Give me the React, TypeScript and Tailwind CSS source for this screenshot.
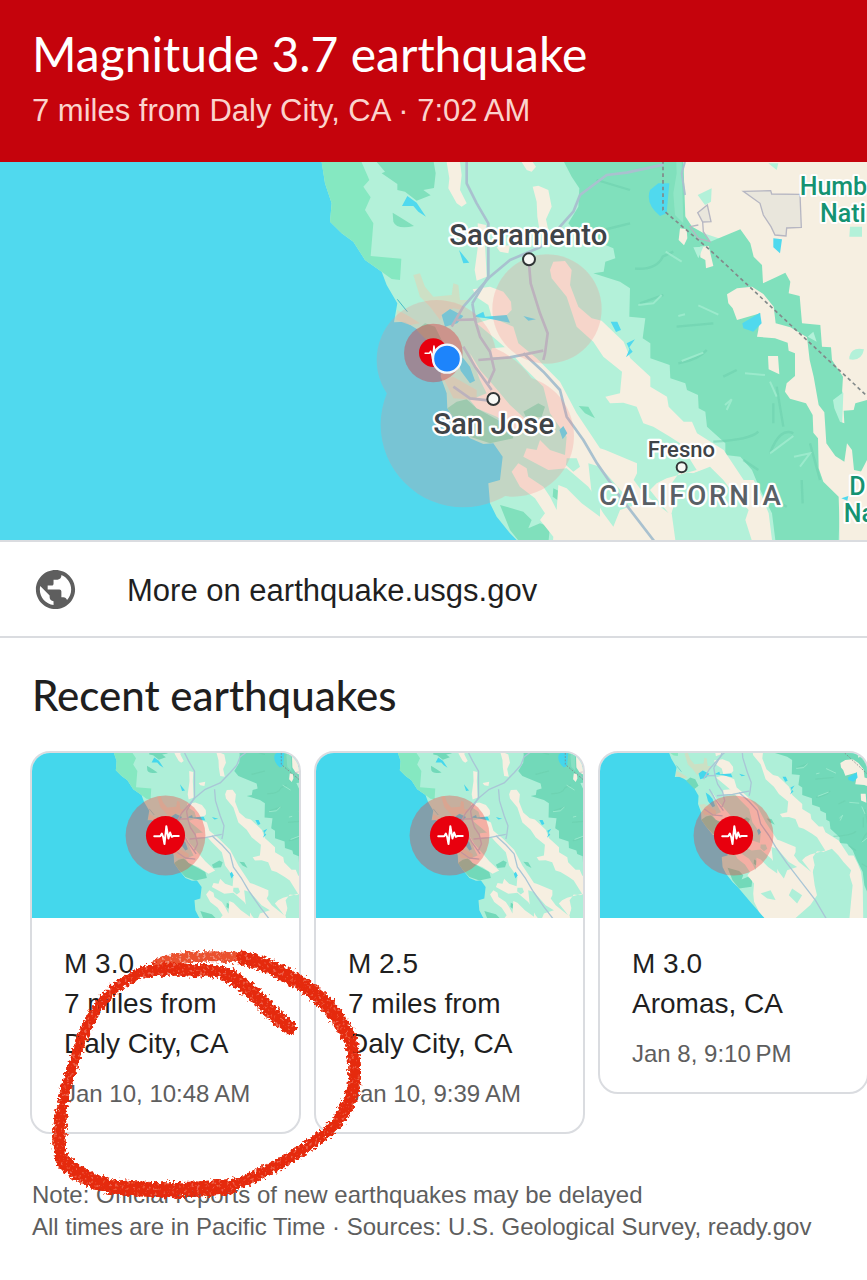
import React from "react";
import { MdPublic } from "react-icons/md";

type Quake = { magnitude: string; place: string[]; time: string; view: string; cx: number; cy: number };

const quakes: Quake[] = [
  { magnitude: "M 3.0", place: ["7 miles from", "Daly City, CA"], time: "Jan 10, 10:48\u202fAM", view: "-450 81 1620 996", cx: 360, cy: 579 },
  { magnitude: "M 2.5", place: ["7 miles from", "Daly City, CA"], time: "Jan 10, 9:39\u202fAM", view: "-450 81 1620 996", cx: 360, cy: 579 },
  { magnitude: "M 3.0", place: ["Aromas, CA"], time: "Jan 8, 9:10\u202fPM", view: "-204 342 1620 996", cx: 606, cy: 840 },
];

/* Northern California terrain, drawn in one shared coordinate space. */
function Terrain({ sea, low, high, road }: { sea: string; low: string; high: string; road: string }) {
  const cream = "#f6efe1";
  return (
    <g>
      <rect x="-1200" y="-100" width="3200" height="1700" fill={sea} />
      <path fill={low} d="M35-100 35 6 45 70 65 130 60 185 95 220 130 245 165 300 215 335 230 375 262 430 252 487 285 485 325 510 360 540 395 600 392 650 410 700 412 745 440 785 480 835 520 852 550 850 578 890 570 960 535 970 540 1030 560 1070 600 1120 630 1150 708 1242 760 1300 830 1380 1900 1600 1900-100Z" />
      <path fill="#85e8c1" d="M35-100 35 6 45 70 65 130 60 185 95 220 130 245 165 300 215 335 245 357 270 360 274 296 182 288 190 190 165 150 182 112 160 80 178 60 152 0 152-100Z" />
      <path fill={high} d="M190-100 200 6 225 35 215 40 262 72 262 90 285 95 320 122 362 106 340 90 372 84 377 40 370 0 370-100Z M248 158Q285 180 312 198 260 210 250 185Z M570 1035 640 1055 665 1080 655 1105 690 1090 720 1100 715 1150 640 1160 600 1110Z" />
      <path fill={high} d="M412 745 440 725 470 718 500 745 600 800 610 835 540 850 480 830 440 785Z M320 510 345 490 375 500 395 540 370 560Z M640 755 685 730 705 740 695 770 650 775Z M806 738 835 740 855 775 825 760Z M730 985 760 1000 750 1025 728 1010Z" />

      {/* Sierra Nevada and Nevada desert */}
      <path fill={cream} d="M1120-100 1120 160 1146 200 1181 220 1226 235 1321 290 1359 370 1476 490 1600 700 1590 960 1586 1400 1900 1600 1900-100Z" />
      <path fill={high} d="M755-100 762 6 785 50 808 85 805 140 775 190 800 220 910 265 916 295 886 305 881 335 850 340 930 365 960 385 958 470 1006 475 998 535 1021 550 1021 595 1079 615 1081 655 1126 670 1131 690 1164 705 1166 745 1186 755 1191 800 1246 850 1246 885 1291 890 1326 930 1351 990 1386 1060 1396 1140 1430 1220 1480 1400 1640 1400 1586 1140 1590 1020 1640 960 1671 900 1671 720 1636 730 1631 750 1601 752 1603 790 1590 785 1573 745 1569 720 1596 700 1599 650 1566 600 1563 562 1536 560 1531 495 1476 490 1469 408 1436 400 1441 365 1426 338 1401 350 1359 370 1356 315 1331 290 1321 250 1291 208 1226 235 1201 245 1181 220 1146 200 1126 170 1120 0 1120-100Z" />
      <path fill={low} d="M1095-100 1100 40 1090 100 1095 165 1120 190 1115 6 1120-100Z" opacity=".35" />
      <path fill={cream} d="M1251 403 1281 385 1326 380 1360 402 1391 440 1397 490 1441 502 1491 532 1499 600 1511 650 1526 735 1543 757 1549 850 1576 888 1603 905 1611 850 1626 870 1632 930 1700 945 1700 1400 1600 1400 1590 1140 1586 1010 1540 965 1526 925 1524 835 1510 818 1508 765 1488 730 1440 716 1425 695 1430 670 1455 648 1455 580 1436 572 1433 548 1395 535 1341 530 1345 510 1351 460 1281 480 1268 445 1255 430Z M1374 588 1404 588 1408 643 1376 628Z M1110 205 1130 208 1132 235 1122 256 1106 240Z M1170 260 1196 258 1210 318 1188 325 1186 300 1171 292Z" />
      <g stroke="#6acdab" fill="none" strokeWidth="7" opacity=".5">
        <path d="M975 326Q1040 330 1058 290L1090 275M990 430 1060 405M1105 610Q1165 600 1190 570M1240 650 1280 630M1210 845Q1320 840 1345 815M1380 880Q1410 800 1450 820M1390 730V790M1500 850 1530 960M1380 1010 1430 1040M1475 960 1478 1030M860 60 960 90M880 210 960 190M1100 500 1210 490M1300 900 1345 930M1400 680 1420 800" />
      </g>
      <g stroke="#a1ecd0" fill="none" strokeWidth="6" opacity=".8">
        <path d="M1067 275 1115 305M985 435 1030 430 1055 405M1165 436 1225 464M1105 468 1125 463M1115 603 1180 578M1305 640 1365 645M1380 665 1400 710M1380 880 1450 828M1245 735 1265 718 1250 750M1452 890 1500 880 1470 920" />
      </g>

      {/* Valley grassland */}
      <path fill={cream} d="M407-100 410 6 418 55 415 85 440 130 455 140 470 130 450 90 455 45 450 6V-100Z M635 6 650 30 665 35 678 20 668 6Z M668 80 685 77 715 90 725 140 708 178 718 225 690 220 682 170 680 125Z M503 190 528 195 525 250 530 350 500 362 494 330 505 250Z M560 262 600 255 595 280 570 275Z" />
      <path fill={cream} d="M488 388 540 380 580 395 603 425 605 450 585 470 545 470 535 435 500 412Z M730 305 765 303 785 330 780 375 805 440 845 475 875 482 941 545 961 595 1021 650 1021 680 1071 710 1076 740 1121 785 1146 785 1161 820 1241 870 1281 930 1301 960 1331 960 1356 1010 1376 1060 1386 1140 1390 1400 1300 1400 1325 1140 1306 1080 1316 1050 1270 1000 1240 960 1200 920 1150 940 1110 935 1085 970 1096 1020 1085 1060 1096 1140 1110 1200 1070 1260 910 1400 830 1380 760 1300 730 1240 725 1190 730 1130 690 1080 705 1060 675 1015 630 980 605 935 625 910 650 925 655 950 700 980 720 1010 740 1050 745 975 770 985 815 1030 870 1070 870 1030 835 980 770 925 715 930 640 890 650 865 680 870 690 840 720 870 765 885 770 830 720 760 700 680 640 620 600 575 560 540 500 490 550 475 610 500 625 550 680 595 750 665 800 760 870 865 886 870 981 910 981 940 971 960 1001 1000 1076 1060 1060 1040 1020 990 1040 970 1070 955 1160 930 1110 850 1080 830 1030 800 1000 790 980 740 940 728 900 730 886 710 930 700 936 635 880 590 850 545 800 500 770 410 725 355 720 330Z" />
      <path fill={cream} d="M480 580 510 630 545 670 600 735 660 790 620 810 560 770 500 745 480 720 530 700 510 660Z M545 565 600 560 640 590 540 592Z" />
      <path fill={low} d="M770 895 800 895 810 920 790 935 768 915Z M835 910 870 920 940 1000 990 1030 930 1050 910 1100 880 1060 845 1000Z M1120 950 1180 930 1230 960 1280 1020 1305 1080 1320 1160 1180 1180 1120 1150 1085 1060Z M770 1190 830 1170 860 1230 810 1220Z M960 1160 1020 1200 990 1250 940 1200Z" />
      <path fill="#d3dcbf" opacity=".8" d="M310 345 330 340 345 380 370 410 425 405 430 370 445 375 450 420 480 420 455 450 430 445 400 460 390 480 360 440 330 410Z M262 450 300 470 330 490 300 495 258 480Z M400 655 430 650 500 690 500 720 430 715Z" />

      {/* Small desert details */}
      <path fill={low} d="M1163 105 1205 85 1203 125 1185 135Z M1375 10H1405L1400 30Z M1618 590Q1625 560 1662 568 1655 605 1618 598Z M1620 200H1656V230H1618Z M1493 530 1510 515 1520 545Z M1150 262 1180 260 1165 295Z" />
      <path fill="#e9e6dc" stroke="#b6b6c2" strokeWidth="4" d="M1300 94 1382 92 1385 102 1470 103 1474 202 1430 204 1428 228 1395 225 1383 200 1360 165 1350 130Z M1163 158 1192 135 1203 185 1178 186Z" />
      <path fill="none" stroke="#b6b6c2" strokeWidth="4" d="M1178 186 1180 215 1200 245 1165 235 1140 200 1165 195" />

      {/* Lakes and bays */}
      <path fill={sea} d="M1045 70 1078 70 1070 160 1050 168Q1005 130 1020 90Z M1390 235 1416 238 1410 280 1390 262Z M1297 490 1350 458 1355 490 1330 515 1300 505Z M902 485 922 485 933 510 918 516Z M950 550 975 538 958 562 968 575 948 592 958 568Z M276 138 292 108 320 128 348 170 325 155 310 138Z M447 270 478 308 460 310Z M395 465 420 447 460 468 442 490 405 500Z M490 470 520 455 525 470 590 465 600 488 530 475Z M640 468 678 478 655 482Z M748 810 760 798 772 820 758 838Z M438 580 460 595 480 620 495 662 480 670 452 632Z M1594 1015 1615 1008 1612 1022Z" />
      <path stroke="#45bcc9" strokeWidth="3" fill="none" d="M262 418 292 455" />

      {/* Highways */}
      <g fill="none" stroke={road} strokeWidth="8" strokeLinejoin="round">
        <path d="M470-100V70L500 130 535 190V350L487 430" />
        <path d="M1060 14 950 38 890 45 850 75 810 105 790 155 750 200 690 262 600 300 540 350 460 440 425 500" />
        <path d="M656 300 662 370 690 460 713 520 705 580 700 600M487 430 495 480 510 530 540 575 553 630 535 670" />
        <path d="M440 480 500 478M505 600 600 592 700 572M460 560 495 620 545 690M430 680 480 715 540 722" />
        <path d="M640 580 700 635 750 690 770 770 820 840 861 910 930 1010 1030 1140 1100 1230 1200 1400" />
        <path d="M1125 6 1115 40 1125 105" strokeWidth="6" />
      </g>
      <path fill="none" stroke="#82898a" strokeWidth="5" strokeDasharray="11 9" d="M1059-100V150L1080 168 1200 270 1671 708 1900 930" />
    </g>
  );
}

function QuakeMarker({ cx, cy, r }: { cx: number; cy: number; r: number }) {
  return (
    <g transform={`translate(${cx} ${cy}) scale(${r / 118})`}>
      <circle r="118" fill="#e8000e" />
      <path fill="none" stroke="#fff" strokeWidth="12" strokeLinecap="round" strokeLinejoin="round" d="M-68 4H-32L-22-12-14 10-6 52 5-56 18 18 28-18 38 8 48 3H80" />
    </g>
  );
}

function MainMap() {
  const label = "[font-family:Roboto,sans-serif] [paint-order:stroke] stroke-white";
  return (
    <svg viewBox="-930 6 2601 1134" preserveAspectRatio="xMidYMid slice" className="block h-[378px] w-full" role="img" aria-label="Map of earthquake area">
      <Terrain sea="#50d9ee" low="#b3f1d9" high="#80e0bc" road="#a9c1cf" />
      <g fill="#f98585" opacity=".24">
        <circle cx="380" cy="600" r="180" />
        <circle cx="460" cy="794" r="248" />
        <circle cx="610" cy="828" r="182" />
        <circle cx="711" cy="447" r="164" />
      </g>
      <circle cx="370" cy="579" r="88" fill="#d92932" opacity=".38" />
      <QuakeMarker cx={370} cy={578} r={43} />
      <circle cx="411" cy="596" r="42" fill="#1d84fb" stroke="#f2f7fa" strokeWidth="7" />
      <g fill="#f8f8f5" stroke="#303536" strokeWidth="6">
        <circle cx="657" cy="298" r="18" />
        <circle cx="550" cy="717" r="18" />
        <circle cx="1115" cy="922" r="15" />
      </g>
      <g className={label} strokeWidth="14" strokeLinejoin="round" fill="#3f4448">
        <text x="655" y="255" textAnchor="middle" fontSize="88" fontWeight="500">Sacramento</text>
        <text x="551" y="823" textAnchor="middle" fontSize="88" fontWeight="500">San Jose</text>
        <text x="1114" y="890" textAnchor="middle" fontSize="66" fontWeight="500">Fresno</text>
        <text x="1144" y="1034" textAnchor="middle" fontSize="83" fontWeight="500" fill="#596066" className="tracking-widest">CALIFORNIA</text>
      </g>
      <g className={label} strokeWidth="12" strokeLinejoin="round" fill="#159372" fontSize="75" fontWeight="500">
        <text x="1469" y="104">Humb</text>
        <text x="1530" y="187">Nati</text>
        <text x="1618" y="1004">D</text>
        <text x="1601" y="1085">Na</text>
      </g>
    </svg>
  );
}

function QuakeCard({ quake }: { quake: Quake }) {
  return (
    <a href="#quake" className="block w-[271px] shrink-0 overflow-hidden rounded-[20px] border-2 border-[#dadce0] bg-white">
      <svg viewBox={quake.view} preserveAspectRatio="xMidYMid slice" className="block h-[165px] w-full" aria-hidden="true">
        <Terrain sea="#44d7ec" low="#aeefd8" high="#72d9b9" road="#a9c6d6" />
        <circle cx={quake.cx} cy={quake.cy} r="241" fill="#f03c38" opacity=".36" />
        <QuakeMarker cx={quake.cx} cy={quake.cy} r={118} />
      </svg>
      <div className="px-8 pt-[26px] pb-5">
        <div className="text-[28px] leading-10 text-[#1f1f1f]">
          <p>{quake.magnitude}</p>
          {quake.place.map((line) => (
            <p key={line}>{line}</p>
          ))}
        </div>
        <p className="mt-3 text-[24px] leading-9 whitespace-nowrap text-[#5e5e5e]">{quake.time}</p>
      </div>
    </a>
  );
}

function CrayonCircle() {
  return (
    <svg viewBox="0 0 1050 840" className="pointer-events-none absolute top-[292px] left-[30px] h-[280px] w-[350px] overflow-visible" aria-hidden="true">
      <defs>
        <filter id="crayon" x="-5%" y="-5%" width="110%" height="110%">
          <feTurbulence type="fractalNoise" baseFrequency="0.11" numOctaves="2" seed="4" result="noise" />
          <feDisplacementMap in="SourceGraphic" in2="noise" scale="27" xChannelSelector="R" yChannelSelector="G" result="rough" />
          <feColorMatrix in="noise" type="matrix" values="0 0 0 0 0  0 0 0 0 0  0 0 0 0 0  0 0 0 7 -2" result="grain" />
          <feComposite in="rough" in2="grain" operator="in" result="speckled" />
          <feComponentTransfer in="rough" result="base">
            <feFuncA type="linear" slope="0.75" />
          </feComponentTransfer>
          <feMerge>
            <feMergeNode in="base" />
            <feMergeNode in="speckled" />
          </feMerge>
        </filter>
      </defs>
      <g filter="url(#crayon)" fill="none" stroke="#e52a08" strokeLinecap="round" strokeLinejoin="round">
        <path opacity=".65" strokeWidth="32" d="M385 99Q450 76 540 80L610 83" />
        <path strokeWidth="42" d="M778 292Q740 262 705 225 640 155 585 132" />
        <path strokeWidth="37" d="M600 137Q570 117 480 121 400 113 350 125" />
        <path strokeWidth="30" d="M360 118Q280 145 230 200 160 280 135 390 100 480 92 560" />
        <path strokeWidth="37" d="M93 550Q82 630 95 690" />
        <path strokeWidth="45" d="M98 690Q140 740 240 770 400 788 600 770" />
        <path strokeWidth="33" d="M600 768Q700 735 800 670 900 608 935 560" />
        <path strokeWidth="38" d="M925 570Q985 495 972 390 970 330 935 285" />
        <path strokeWidth="43" d="M950 310Q900 210 800 153 710 100 640 84" />
      </g>
    </svg>
  );
}

export default function App() {
  return (
    <main className="min-h-screen overflow-x-hidden bg-white [font-family:'Liberation_Sans',Arial,sans-serif]">
      <header className="bg-[#c5030c] px-8 pt-5 pb-7">
        <h1 className="text-[48px] leading-[68px] text-white [font-family:Lato,sans-serif]">Magnitude 3.7 earthquake</h1>
        <p className="text-[31px] leading-[46px] text-[#fbd3cd]">7 miles from Daly City, CA · 7:02{"\u202f"}AM</p>
      </header>
      <MainMap />
      <a href="https://earthquake.usgs.gov" className="flex h-[98px] items-center gap-[48px] border-y-2 border-[#dadce0] px-8 text-[31px] text-[#1f1f1f]">
        <MdPublic className="size-[47px] shrink-0 text-[#5e5e5e]" aria-hidden="true" />
        <span className="pt-1">More on earthquake.usgs.gov</span>
      </a>
      <section className="relative">
        <h2 className="px-8 pt-8 pb-[31px] text-[42px] leading-[50px] font-medium text-[#1f1f1f] [font-family:Lato,sans-serif]">Recent earthquakes</h2>
        <div className="flex items-start gap-[13px] overflow-x-auto pl-[30px] [scrollbar-width:none]">
          {quakes.map((quake, i) => (
            <QuakeCard key={i} quake={quake} />
          ))}
        </div>
        <footer className="px-8 pt-[45px] pb-10 text-[24px] leading-8 text-[#5e5e5e]">
          <p>Note: Official reports of new earthquakes may be delayed</p>
          <p>All times are in Pacific Time · Sources: U.S. Geological Survey, ready.gov</p>
        </footer>
        <CrayonCircle />
      </section>
    </main>
  );
}
